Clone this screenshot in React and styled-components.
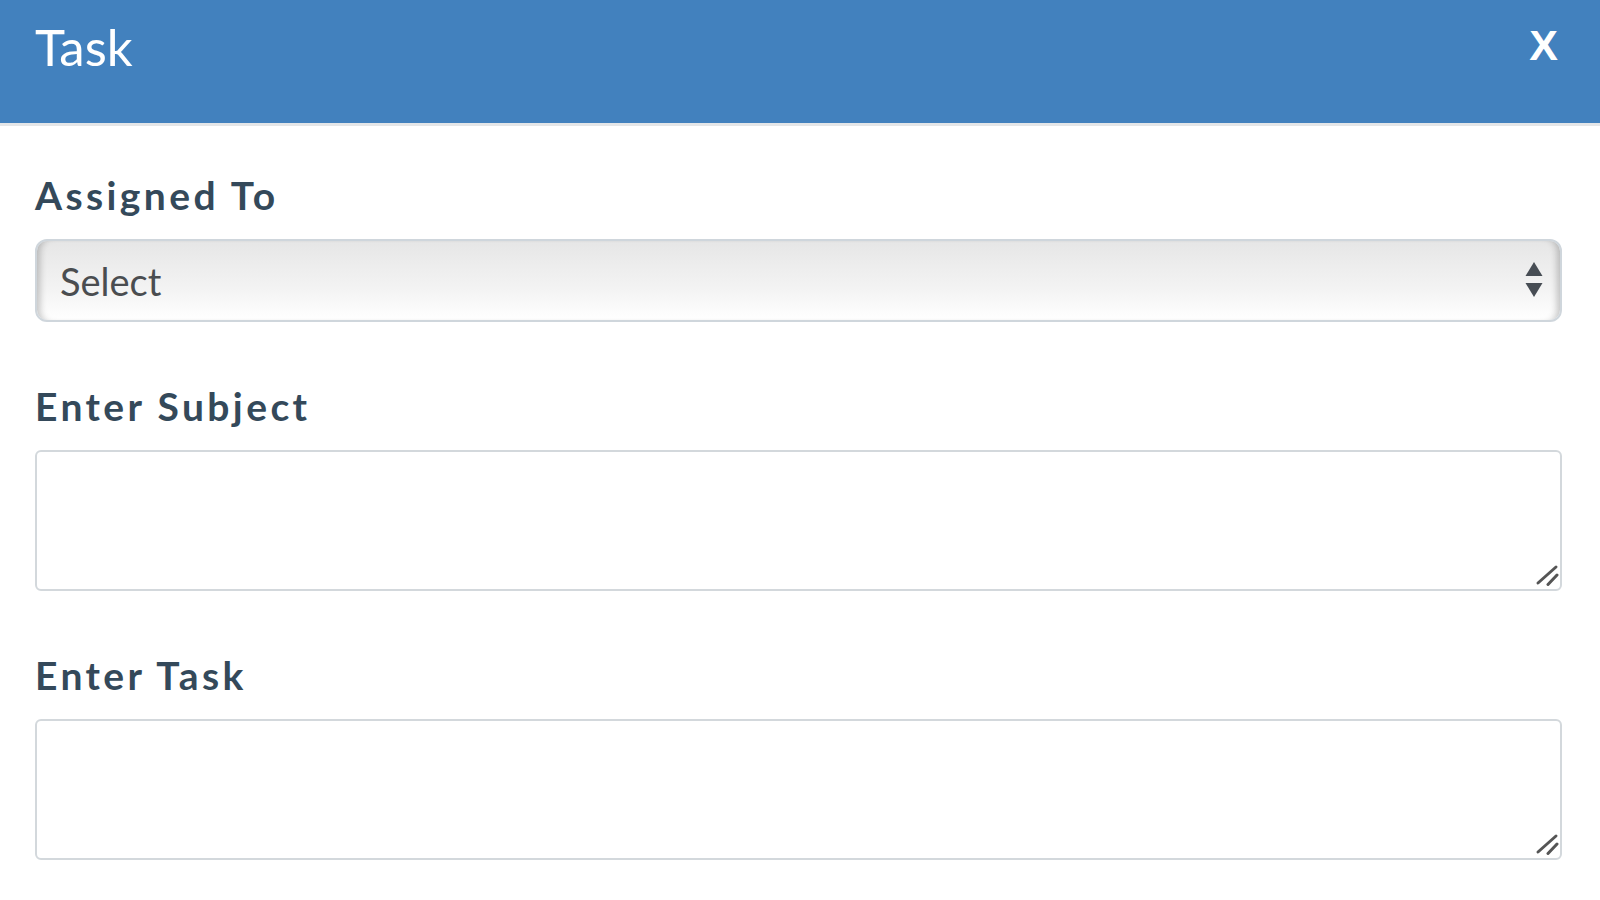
import React from "react";
import styled, { createGlobalStyle } from "styled-components";

const Global = createGlobalStyle`
  html, body { margin: 0; padding: 0; background: #ffffff; }
  body { font-family: Lato, "Open Sans", sans-serif; }
  * { box-sizing: border-box; }
`;

const Page = styled.div`
  width: 1600px;
  min-height: 900px;
  background: #ffffff;
`;

const Header = styled.header`
  height: 126px;
  background: #4281be;
  border-bottom: 3px solid #e4e6e8;
  display: flex;
  justify-content: space-between;
  align-items: flex-start;
  padding: 0 42px 0 35px;
`;

const Title = styled.h1`
  margin: 0;
  font-family: Lato, sans-serif;
  font-weight: 400;
  font-size: 51px;
  line-height: 60px;
  padding-top: 17px;
  color: #ffffff;
`;

const Close = styled.button`
  border: 0;
  background: none;
  padding: 0;
  margin-top: 20px;
  font-family: "Liberation Sans", Arial, sans-serif;
  font-weight: 700;
  font-size: 43px;
  line-height: 50px;
  color: #ffffff;
  cursor: pointer;
`;

const Form = styled.form`
  display: flex;
  flex-direction: column;
  padding: 44px 38px 0 35px;
`;

const Field = styled.div`
  display: flex;
  flex-direction: column;
  margin-bottom: ${(p) => p.$gap || 0}px;
`;

const Label = styled.label`
  font-family: Lato, sans-serif;
  font-weight: 700;
  font-size: 39px;
  line-height: 50px;
  letter-spacing: 3.4px;
  color: #34495a;
  margin-bottom: 19px;
`;

const SelectWrap = styled.div`
  position: relative;
  height: 83px;
`;

const Select = styled.select`
  appearance: none;
  -webkit-appearance: none;
  width: 100%;
  height: 100%;
  border: 2px solid #cfd6dc;
  border-radius: 12px;
  background: linear-gradient(to bottom, #e6e6e6 0%, #f3f3f3 60%, #ffffff 100%);
  box-shadow: inset 8px 0 7px -5px rgba(0, 0, 0, 0.22),
    inset -8px 0 7px -5px rgba(0, 0, 0, 0.22);
  padding: 0 60px 0 23px;
  font-family: Lato, sans-serif;
  font-size: 38px;
  color: #4a4d50;
  outline: none;
`;

const Arrows = styled.svg`
  position: absolute;
  right: 19px;
  top: 23px;
  pointer-events: none;
`;

const AreaWrap = styled.div`
  position: relative;
  height: 141px;
`;

const TextArea = styled.textarea`
  display: block;
  width: 100%;
  height: 100%;
  border: 2px solid #d3d8dc;
  border-radius: 6px;
  resize: none;
  padding: 12px 16px;
  font-family: Lato, sans-serif;
  font-size: 34px;
  color: #333;
  outline: none;
  background: #fff;
`;

const Grip = styled.svg`
  position: absolute;
  right: 3px;
  bottom: 5px;
  pointer-events: none;
`;

function ResizeGrip() {
  return (
    <Grip width="24" height="24" viewBox="0 0 24 24">
      <line x1="3" y1="21" x2="21" y2="5" stroke="#555" strokeWidth="3" strokeLinecap="round" />
      <line x1="13" y1="22.5" x2="22" y2="13" stroke="#555" strokeWidth="3" strokeLinecap="round" />
    </Grip>
  );
}

export default function App() {
  return (
    <Page>
      <Global />
      <Header>
        <Title>Task</Title>
        <Close type="button" aria-label="Close">X</Close>
      </Header>
      <Form>
        <Field $gap={59}>
          <Label htmlFor="assigned">Assigned To</Label>
          <SelectWrap>
            <Select id="assigned" defaultValue="">
              <option value="">Select</option>
            </Select>
            <Arrows width="18" height="36" viewBox="0 0 18 36">
              <polygon points="9,0 17.5,14 0.5,14" fill="#474d54" />
              <polygon points="0.5,21 17.5,21 9,35" fill="#474d54" />
            </Arrows>
          </SelectWrap>
        </Field>
        <Field $gap={59}>
          <Label htmlFor="subject">Enter Subject</Label>
          <AreaWrap>
            <TextArea id="subject" />
            <ResizeGrip />
          </AreaWrap>
        </Field>
        <Field>
          <Label htmlFor="task">Enter Task</Label>
          <AreaWrap>
            <TextArea id="task" />
            <ResizeGrip />
          </AreaWrap>
        </Field>
      </Form>
    </Page>
  );
}
